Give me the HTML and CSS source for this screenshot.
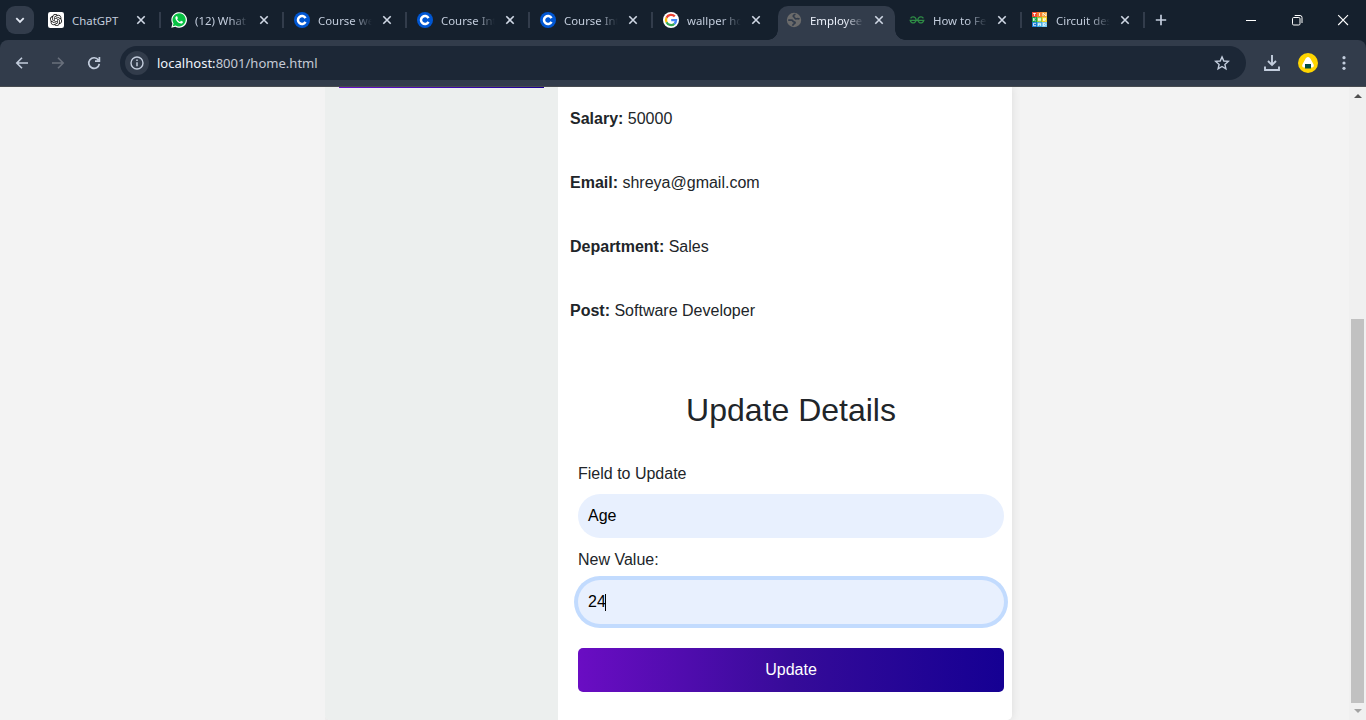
FILE: index.html
```html
<!DOCTYPE html>
<html lang="en">
<head>
<meta charset="utf-8">
<title>Employee</title>
<link rel="stylesheet" href="styles.css">
</head>
<body>
<svg class="defs" aria-hidden="true">
  <symbol id="close" viewBox="0 0 10 10"><path d="M1.3 1.3 8.7 8.7M8.7 1.3 1.3 8.7" fill="none" stroke="currentColor" stroke-width="1.6"/></symbol>
  <symbol id="coursera" viewBox="0 0 16 16"><circle cx="8" cy="8" r="8" fill="#0056d2"/><path d="M11.5 6.1A4 4 0 1 0 11.5 9.9" fill="none" stroke="#fff" stroke-width="2.5"/></symbol>
</svg>
<header class="tabstrip">
  <button class="search-tabs"><svg width="10" height="7" viewBox="0 0 10 7"><path d="M1.3 1.2 5 4.9 8.7 1.2" fill="none" stroke="currentColor" stroke-width="1.8"/></svg></button>
  <nav class="tabs">
    <div class="tab">
      <svg class="favicon" viewBox="0 0 16 16"><rect width="16" height="16" rx="2.2" fill="#fff"/>
        <path transform="translate(1.9 1.9) scale(.508)" fill="#111" d="M22.2819 9.8211a5.9847 5.9847 0 0 0-.5157-4.9108 6.0462 6.0462 0 0 0-6.5098-2.9A6.0651 6.0651 0 0 0 4.9807 4.1818a5.9847 5.9847 0 0 0-3.9977 2.9 6.0462 6.0462 0 0 0 .7427 7.0966 5.98 5.98 0 0 0 .511 4.9107 6.051 6.051 0 0 0 6.5146 2.9001A5.9847 5.9847 0 0 0 13.2599 24a6.0557 6.0557 0 0 0 5.7718-4.2058 5.9894 5.9894 0 0 0 3.9977-2.9001 6.0557 6.0557 0 0 0-.7475-7.0729zm-9.022 12.6081a4.4755 4.4755 0 0 1-2.8764-1.0408l.1419-.0804 4.7783-2.7582a.7948.7948 0 0 0 .3927-.6813v-6.7369l2.02 1.1686a.071.071 0 0 1 .038.052v5.5826a4.504 4.504 0 0 1-4.4945 4.4944zm-9.6607-4.1254a4.4708 4.4708 0 0 1-.5346-3.0137l.142.0852 4.783 2.7582a.7712.7712 0 0 0 .7806 0l5.8428-3.3685v2.3324a.0804.0804 0 0 1-.0332.0615L9.74 19.9502a4.4992 4.4992 0 0 1-6.1408-1.6464zM2.3408 7.8956a4.485 4.485 0 0 1 2.3655-1.9728V11.6a.7664.7664 0 0 0 .3879.6765l5.8144 3.3543-2.0201 1.1685a.0757.0757 0 0 1-.071 0l-4.8303-2.7865A4.504 4.504 0 0 1 2.3408 7.872zm16.5963 3.8558L13.1038 8.364 15.1192 7.2a.0757.0757 0 0 1 .071 0l4.8303 2.7913a4.4944 4.4944 0 0 1-.6765 8.1042v-5.6772a.79.79 0 0 0-.407-.667zm2.0107-3.0231l-.142-.0852-4.7735-2.7818a.7759.7759 0 0 0-.7854 0L9.409 9.2297V6.8974a.0662.0662 0 0 1 .0284-.0615l4.8303-2.7866a4.4992 4.4992 0 0 1 6.6802 4.66zM8.3065 12.863l-2.02-1.1638a.0804.0804 0 0 1-.038-.0567V6.0742a4.4992 4.4992 0 0 1 7.3757-3.4537l-.142.0805L8.704 5.459a.7948.7948 0 0 0-.3927.6813zm1.0976-2.3654l2.602-1.4998 2.6069 1.4998v2.9994l-2.5974 1.4997-2.6067-1.4997Z"/></svg>
      <span class="title">ChatGPT</span><svg class="close"><use href="#close"/></svg>
    </div>
    <div class="tab">
      <svg class="favicon" viewBox="0 0 16 16"><path d="M.3 15.7 1.4 11.8A7.8 7.8 0 1 1 4.3 14.7z" fill="#fff"/><path d="M1.8 14.2 2.6 11.5A6.6 6.6 0 1 1 4.7 13.5z" fill="#08c143"/><path d="M5.4 4.2c-.7.2-1.1 1-1 1.9.3 2.7 3.1 5.3 5.6 5.5 1.1.1 2-.7 2-1.8L10 8.8l-1 1.1C7.7 9.4 6.6 8.4 6.1 7.2l.8-1-.7-1.9z" fill="#fff"/></svg>
      <span class="title">(12) What</span><svg class="close"><use href="#close"/></svg>
    </div>
    <div class="tab"><svg class="favicon"><use href="#coursera"/></svg><span class="title">Course we</span><svg class="close"><use href="#close"/></svg></div>
    <div class="tab"><svg class="favicon"><use href="#coursera"/></svg><span class="title">Course Int</span><svg class="close"><use href="#close"/></svg></div>
    <div class="tab"><svg class="favicon"><use href="#coursera"/></svg><span class="title">Course Int</span><svg class="close"><use href="#close"/></svg></div>
    <div class="tab before-active">
      <svg class="favicon" viewBox="0 0 16 16"><circle cx="8" cy="8" r="8" fill="#fff"/><g fill="none" stroke-width="2.3"><path d="M11.8 4.4A5.1 5.1 0 0 0 3.5 5.7" stroke="#ea4335"/><path d="M3.5 5.7a5.1 5.1 0 0 0 0 4.6" stroke="#fbbc05"/><path d="M3.5 10.3a5.1 5.1 0 0 0 7.9 1.5" stroke="#34a853"/><path d="M11.4 11.8A5 5 0 0 0 13.1 8.1H8.2" stroke="#4285f4"/></g></svg>
      <span class="title">wallper ho</span><svg class="close"><use href="#close"/></svg>
    </div>
    <div class="tab active">
      <svg class="favicon" viewBox="0 0 16 16"><circle cx="8" cy="8" r="7.2" fill="#6b6b6b"/><path d="M2.2 8.2H5.6C7 8.2 6.6 9.8 8 9.9c1.6.1 1.2 1.3.2 1.9-.9.5-1.300 1-1.600 1.900M9.500 2.300C7.200 2.900 6.700 4.200 8 4.900c1.100.5.300 1.700 1.600 1.900 1.400.1 2.200-.6 3.900.3" fill="none" stroke="#323c4b" stroke-width="1.7"/></svg>
      <span class="title">Employee</span><svg class="close"><use href="#close"/></svg>
    </div>
    <div class="tab">
      <svg class="favicon" viewBox="0 0 16 16"><path d="M1.6 6.300A3 3 0 1 1 1.200 8.400H14.800A3 3 0 1 1 14.400 6.300" fill="none" stroke="#2f8d46" stroke-width="1.3"/></svg>
      <span class="title">How to Fe</span><svg class="close"><use href="#close"/></svg>
    </div>
    <div class="tab">
      <svg class="favicon" viewBox="0 0 16 16"><path fill="#f1492f" d="M0 0h5v5H0z"/><path fill="#f47d31" d="M5 0h5v5H5z"/><path fill="#f6a035" d="M10 0h5v5h-5z"/><path fill="#17a34c" d="M0 5h5v5H0z"/><path fill="#8dc63f" d="M5 5h5v5H5z"/><path fill="#f2cf23" d="M10 5h5v5h-5z"/><path fill="#1477d1" d="M0 10h5v5H0z"/><path fill="#3da9e0" d="M5 10h5v5H5z"/><path fill="#75c5ef" d="M10 10h5v5h-5z"/><path d="M1 1.500h3M2.500 1v3M7.500 1v3M11 4V1l3 3V1M1.500 6v3M3.700 6 1.800 7.500 3.700 9M9 6.300H6.500v2.400H9M6.500 7.500H9M11.500 9V6.300h2v1.400h-2l2 1.300M4 11.300H1.500v2.400H4M6.300 14v-2.700h2.400V14M6.300 12.700h2.400M11.400 11.300h1.300l1 1.200-1 1.200h-1.300z" fill="none" stroke="#fff" stroke-width=".8"/></svg>
      <span class="title">Circuit des</span><svg class="close"><use href="#close"/></svg>
    </div>
  </nav>
  <svg class="new-tab" viewBox="0 0 12 12"><path d="M6 .8v10.400M.8 6h10.400" stroke="currentColor" stroke-width="1.7"/></svg>
  <div class="window-controls">
    <svg viewBox="0 0 12 12"><path d="M1 6.500h10" stroke="#fff"/></svg>
    <svg viewBox="0 0 12 12"><rect x="1.500" y="3.500" width="7.500" height="7.500" rx="1.200" fill="none" stroke="#fff"/><path d="M3.700 1.500H9A2 2 0 0 1 11 3.500V9" fill="none" stroke="#fff"/></svg>
    <svg viewBox="0 0 12 12"><path d="m1.200 1.200 9.800 9.800M11 1.200 1.200 11" stroke="#fff" stroke-width="1.1"/></svg>
  </div>
</header>
<div class="toolbar">
  <div class="navigation">
    <svg viewBox="0 0 16 16"><path d="M14 8H3M8 2.800 2.800 8 8 13.200" fill="none" stroke="currentColor" stroke-width="1.600"/></svg>
    <svg class="disabled" viewBox="0 0 16 16"><path d="M2 8h11M8 2.800 13.200 8 8 13.200" fill="none" stroke="currentColor" stroke-width="1.600"/></svg>
    <svg viewBox="0 0 16 16"><path d="M13.300 8.800A5.300 5.300 0 1 1 12.400 5M13.400 1.900v4.300H9" fill="none" stroke="currentColor" stroke-width="1.700"/></svg>
  </div>
  <div class="address">
    <span class="info"><svg viewBox="0 0 16 16"><circle cx="8" cy="8" r="6" fill="none" stroke="currentColor" stroke-width="1.400"/><path d="M8 7.200v4M8 4.500v1.500" stroke="currentColor" stroke-width="1.500"/></svg></span>
    <span class="url"><b>localhost:</b>8001/home.html</span>
    <svg class="star" viewBox="0 0 16 16"><path d="m8 1.900 1.800 4.100 4.500.4-3.400 3 1 4.400L8 11.500l-3.900 2.300 1-4.400-3.400-3 4.500-.4z" fill="none" stroke="currentColor" stroke-width="1.400"/></svg>
  </div>
  <div class="actions">
    <svg width="16" height="16" viewBox="0 0 16 16"><path d="M8 0v9.500M4 6l4 4 4-4M1 11.500V15h14v-3.500" fill="none" stroke="currentColor" stroke-width="1.900"/></svg>
    <svg width="20" height="20" viewBox="0 0 20 20"><circle cx="10" cy="10" r="10" fill="#ffd500"/><path d="M10 4c1.300 0 2.100 1 3 2.700l2.500 4.600c.8 1.700.1 3.200-1.500 3.200H6c-1.600 0-2.300-1.500-1.500-3.200L7 6.700C7.900 5 8.700 4 10 4z" fill="#fff"/><path d="M7 11h6v4.500H7z" fill="#004d40"/></svg>
    <svg width="4" height="16" viewBox="0 0 4 16" fill="currentColor"><circle cx="2" cy="2.700" r="1.600"/><circle cx="2" cy="8" r="1.600"/><circle cx="2" cy="13.300" r="1.600"/></svg>
  </div>
</div>
<div class="viewport">
  <main class="page">
    <div class="container">
      <aside class="sidebar"><div class="sidebar-button"></div></aside>
      <section class="details">
        <p><strong>Salary:</strong> 50000</p>
        <p><strong>Email:</strong> shreya@gmail.com</p>
        <p><strong>Department:</strong> Sales</p>
        <p><strong>Post:</strong> Software Developer</p>
        <form class="update">
          <h2>Update Details</h2>
          <label>Field to Update</label>
          <div class="field">Age</div>
          <label>New Value:</label>
          <div class="field focused">24<i class="caret"></i></div>
          <button type="button" class="submit">Update</button>
        </form>
      </section>
    </div>
  </main>
  <div class="scrollbar">
    <svg width="8" height="4" viewBox="0 0 8 4"><path d="M0 4 4 0l4 4z" fill="#505050"/></svg>
    <div class="thumb"></div>
    <svg width="8" height="4" viewBox="0 0 8 4"><path d="m0 0 4 4 4-4z" fill="#a3a3a3"/></svg>
  </div>
</div>
</body>
</html>
```
FILE: styles.css
```css
* { box-sizing: border-box; }
body { margin: 0; width: 1366px; height: 720px; overflow: hidden; display: flex; flex-direction: column; background: #15202d; font-family: "Liberation Sans", Arial, sans-serif; }
button { border: 0; padding: 0; font: inherit; }
svg { display: block; flex: none; }
.defs { display: none; }

.tabstrip { height: 40px; flex: none; display: flex; align-items: center; color: #c3cddd; font-family: "Noto Sans", sans-serif; font-size: 11.4px; padding-left: 6px; }
.search-tabs { width: 28px; height: 28px; border-radius: 9px; background: #323c4b; color: #e2e8f3; display: grid; place-items: center; margin-right: 3px; }
.tabs { display: flex; height: 40px; }
.tab { width: 123px; height: 40px; display: flex; align-items: center; padding-left: 11px; position: relative; }
.tab:not(.active):not(.before-active)::after { content: ""; position: absolute; right: -1px; top: 12px; width: 2px; height: 16px; background: #323c4b; }
.favicon { width: 16px; height: 16px; }
.title { width: 61px; margin-left: 7px; padding: 1px 0 0 1px; line-height: 20px; white-space: nowrap; -webkit-mask-image: linear-gradient(90deg, #000 58%, transparent 90%); mask-image: linear-gradient(90deg, #000 58%, transparent 90%); }
.tab:first-child .title { -webkit-mask-image: none; mask-image: none; }
.close { width: 10px; height: 10px; margin-left: 4px; color: #d0d8e5; }
.active { color: #edf2fc; z-index: 0; }
.active::before { content: ""; position: absolute; z-index: -1; left: 3px; width: 117px; top: 6px; bottom: 0; border-radius: 10px 10px 0 0; background: #323c4b; }
.active::after { content: ""; position: absolute; z-index: -1; left: -7px; right: -7px; bottom: 0; height: 10px; background: radial-gradient(circle at 0 0, transparent 9.5px, #323c4b 10px) left / 10px 10px no-repeat, radial-gradient(circle at 100% 0, transparent 9.5px, #323c4b 10px) right / 10px 10px no-repeat; }
.new-tab { width: 12px; height: 12px; margin-left: 11px; }
.window-controls { margin-left: auto; display: flex; gap: 34px; padding-right: 17px; }
.window-controls svg { width: 12px; height: 12px; }

.toolbar { height: 47px; flex: none; display: flex; align-items: center; background: #323c4b; border-bottom: 1px solid #474b50; border-radius: 8px 8px 0 0; color: #c3cddd; }
.navigation { display: flex; gap: 20px; padding-left: 14px; }
.navigation svg { width: 16px; height: 16px; }
.disabled { color: #69707c; }
.address { width: 1126px; height: 34px; margin-left: 18px; padding: 0 16px 0 5px; border-radius: 17px; background: #1c2736; display: flex; align-items: center; }
.info { width: 24px; height: 24px; border-radius: 50%; background: #323c4b; display: grid; place-items: center; }
.info svg { width: 16px; height: 16px; }
.url { margin-left: 8px; font: 13.05px "Noto Sans", sans-serif; color: #c5cad5; }
.url b { font-weight: 400; color: #eef3fc; }
.star { width: 16px; height: 16px; margin-left: auto; }
.actions { display: flex; align-items: center; margin-left: 18px; gap: 18px; }
.actions svg:last-child { margin-left: 6px; }

.viewport { height: 633px; display: flex; background: #f3f3f3; }
.page { width: 1349px; overflow: hidden; padding-left: 325px; }
.container { width: 687px; height: 633px; display: flex; border-radius: 0 0 5px 5px; box-shadow: 0 0 10px rgba(0, 0, 0, .1); clip-path: inset(0 -20px 0 0); background: linear-gradient(90deg, #ecefee 240px, transparent 240px); }
.sidebar { width: 233px; padding-left: 14px; }
.sidebar-button { width: 205px; height: 1px; background: linear-gradient(90deg, #6a11cb, #1b0093); }
.details { width: 454px; padding: 20px 8px 0 12px; background: #fff; color: #212529; border-radius: 0 0 5px 0; font-size: 16px; line-height: 24px; }
.details p { margin: 0 0 40px; }
.update { padding: 27px 0 0 8px; display: flex; flex-direction: column; }
.update h2 { margin: 0 0 32px; font-size: 32px; font-weight: 400; line-height: 40px; text-align: center; }
.update label { line-height: 24px; }
.field { height: 44px; margin: 8px 0 10px; padding: 0 10px; border-radius: 22px; background: #e8f0fe; color: #000; display: flex; align-items: center; }
.focused { margin-bottom: 9px; box-shadow: 0 0 0 4px #c2dbfe; }
.caret { width: 1px; height: 17px; background: #000; margin-left: -1px; }
.submit { height: 44px; margin-top: 15px; border-radius: 5px; background: linear-gradient(90deg, #6a0dc3, #360b99 50%, #150093); color: #fff; font-size: 16px; }
.scrollbar { width: 17px; height: 633px; background: #f0f0f0; display: flex; flex-direction: column; align-items: center; padding: 7px 0; }
.thumb { width: 13px; height: 384px; margin-top: auto; margin-bottom: 6px; background: #c1c1c1; }
```
